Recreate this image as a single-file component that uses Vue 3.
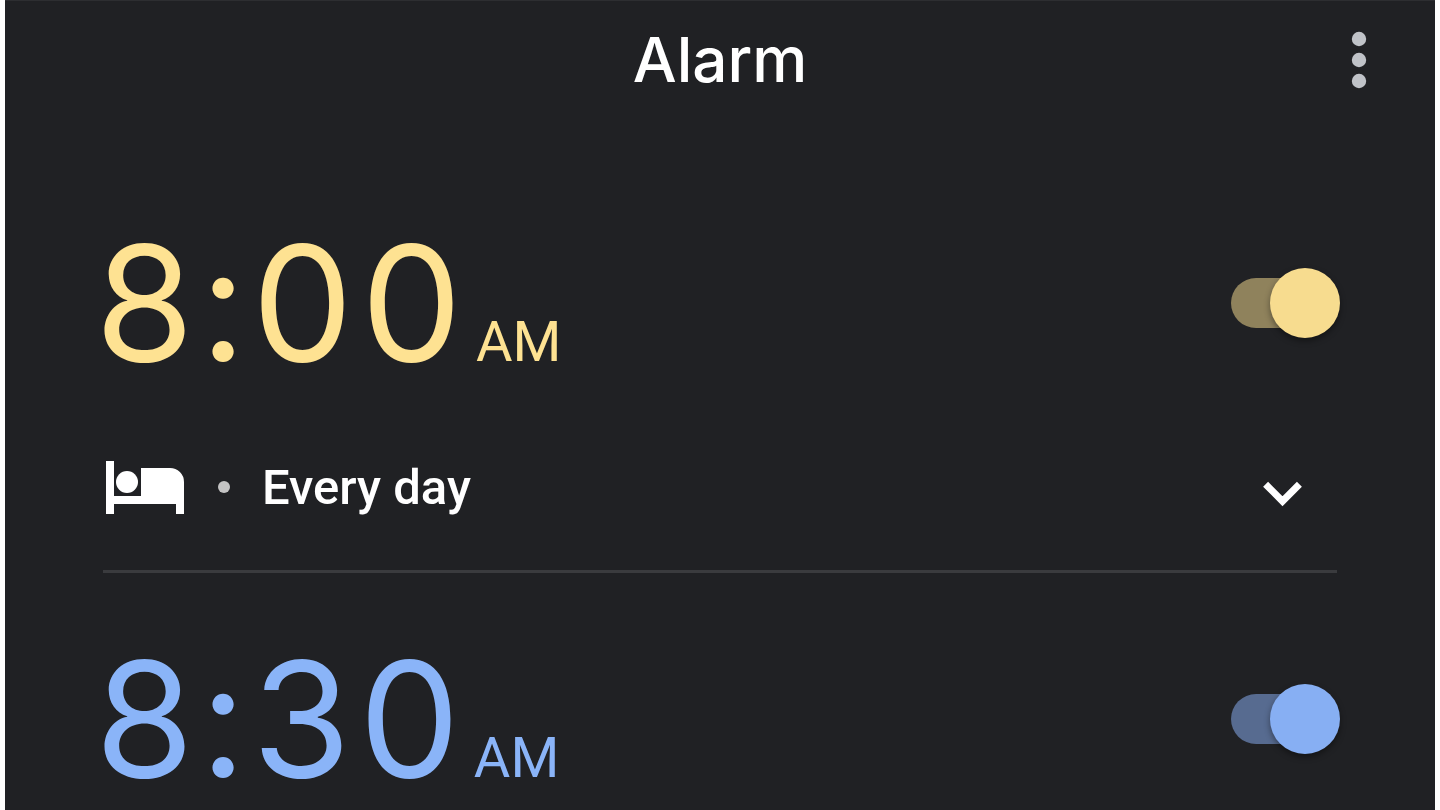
<script setup>
import { ref } from 'vue'

const alarms = ref([
  { id: 1, hour: '8', minute: '00', period: 'AM', tone: 'yellow', on: true, repeat: 'Every day' },
  { id: 2, hour: '8', minute: '30', period: 'AM', tone: 'blue', on: true, repeat: '' },
])
</script>

<template>
  <main class="screen">
    <header class="top">
      <h1 class="title">Alarm</h1>
      <button class="icon-button more" type="button" aria-label="More options">
        <svg width="16" height="58" viewBox="0 0 16 58" fill="currentColor" aria-hidden="true">
          <circle cx="8" cy="8" r="7.2" />
          <circle cx="8" cy="29" r="7.2" />
          <circle cx="8" cy="50" r="7.2" />
        </svg>
      </button>
    </header>

    <section v-for="alarm in alarms" :key="alarm.id" class="alarm" :class="alarm.tone">
      <div class="time-row">
        <label class="time" :for="`alarm-${alarm.id}`">
          <span class="digits">{{ alarm.hour }}</span>
          <span class="digits colon">:</span>
          <span class="digits minutes"><span v-for="(d, i) in alarm.minute" :key="i">{{ d }}</span></span>
          <span class="period">{{ alarm.period }}</span>
        </label>
        <input :id="`alarm-${alarm.id}`" v-model="alarm.on" class="switch" type="checkbox" />
      </div>

      <div v-if="alarm.repeat" class="repeat-row">
        <svg width="78" height="53" viewBox="0 0 78 53" fill="currentColor" aria-hidden="true">
          <path d="M0 0h8v35h27V7h29a14 14 0 0 1 14 14v32h-8V43H8v10H0z" />
          <circle cx="21" cy="21" r="11" />
        </svg>
        <span class="dot"></span>
        <span class="repeat">{{ alarm.repeat }}</span>
        <button class="icon-button expand" type="button" aria-label="Expand alarm">
          <svg width="40" height="26" viewBox="0 0 40 26" fill="none" stroke="currentColor" stroke-width="7" aria-hidden="true">
            <path d="M2.6 3.2L19.5 20.2 36.4 3.2" />
          </svg>
        </button>
      </div>
    </section>
  </main>
</template>

<style>
body {
  margin: 0;
  background: #fff;
}
</style>

<style scoped>
.screen {
  box-sizing: border-box;
  min-height: 100vh;
  margin: 0 5px;
  border-top: 1px solid #2d2e31;
  background: #202124;
  color: #fff;
  font-family: Roboto, "Liberation Sans", sans-serif;
}

.top {
  display: grid;
  grid-template-columns: 1fr auto 1fr;
  align-items: center;
  height: 118px;
  padding: 0 68px;
}

.title {
  grid-column: 2;
  margin: 0;
  font: 500 62px/80px Inter, sans-serif;
}

.icon-button {
  display: flex;
  padding: 0;
  border: 0;
  background: none;
  color: inherit;
  cursor: pointer;
}

.more {
  justify-self: end;
  color: #c0c3c8;
}

.alarm {
  margin: 0 98px;
  padding: 66px 0 43px;
}

.top + .alarm {
  padding-top: 104px;
}

.alarm + .alarm {
  padding-bottom: 0;
  border-top: 3px solid #3a3b3e;
}

.yellow {
  --tone: #fee292;
  --thumb: #f7dc8f;
  --track: #8f825c;
}

.blue {
  --tone: #8ab4f8;
  --thumb: #87aff3;
  --track: #576b90;
}

.time-row {
  display: flex;
  align-items: center;
  justify-content: space-between;
  height: 160px;
}

.time {
  display: flex;
  align-items: baseline;
  margin-left: -8px;
  color: var(--tone);
}

.digits {
  font: 400 160px/160px Inter, sans-serif;
}

.colon {
  margin: 0 6px;
}

.minutes {
  display: flex;
  gap: 8px;
}

.period {
  margin-left: 14px;
  font-size: 56px;
  line-height: 64px;
}

.switch {
  position: relative;
  width: 106px;
  height: 50px;
  margin: 0;
  border-radius: 25px;
  appearance: none;
  background: #5f6368;
  cursor: pointer;
}

.switch::before {
  content: "";
  position: absolute;
  top: -10px;
  left: -3px;
  width: 70px;
  height: 70px;
  border-radius: 50%;
  background: #bdc1c6;
  box-shadow: 0 3px 6px rgba(0, 0, 0, 0.4);
}

.switch:checked {
  background: var(--track);
}

.switch:checked::before {
  right: -3px;
  left: auto;
  background: var(--thumb);
}

.repeat-row {
  display: flex;
  align-items: center;
  height: 80px;
  margin-top: 64px;
  padding: 0 34px 0 3px;
}

.dot {
  width: 12px;
  height: 12px;
  margin: 0 32px 0 34px;
  border-radius: 50%;
  background: #c4c4c4;
}

.repeat {
  padding-top: 2px;
  font-size: 49px;
  font-weight: 500;
  line-height: 56px;
}

.expand {
  margin-left: auto;
  padding-top: 14px;
}
</style>
